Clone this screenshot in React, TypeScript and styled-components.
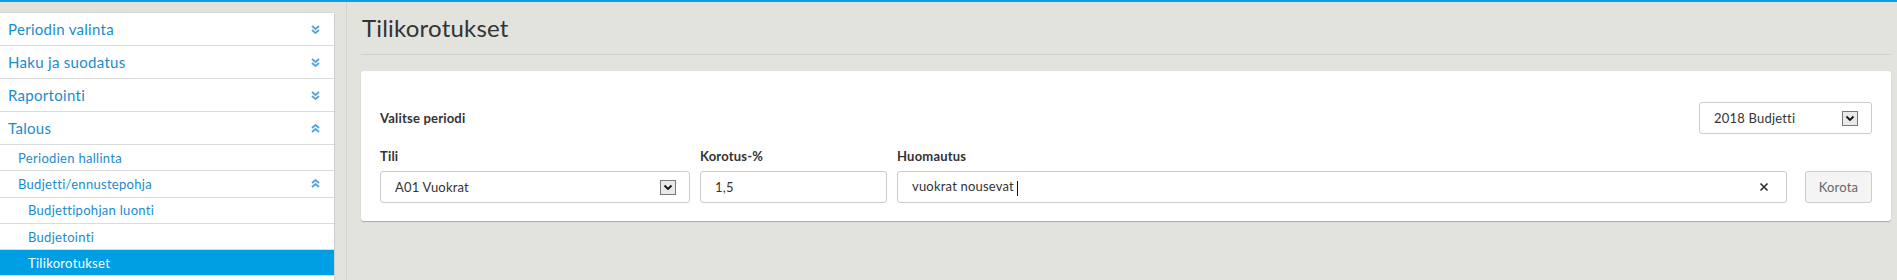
import React from "react";
import styled, { createGlobalStyle } from "styled-components";

const Global = createGlobalStyle`
  html, body { margin: 0; padding: 0; }
  body {
    background: #e3e3de;
    font-family: "Lato", "Open Sans", sans-serif;
    overflow: hidden;
  }
  * { box-sizing: border-box; }
`;

const Page = styled.div`
  border-top: 2px solid #0a9fe2;
  display: flex;
  align-items: stretch;
  min-height: 280px;
`;

const Sidebar = styled.nav`
  width: 335px;
  margin-top: 10px;
  background: #fff;
  border-top: 1px solid #d6d6d2;
  border-right: 1px solid #cfcfcb;
  border-top-right-radius: 3px;
  flex-shrink: 0;
  display: flex;
  flex-direction: column;
`;

const NavRow = styled.div<{ $level: number; $active?: boolean }>`
  display: flex;
  align-items: center;
  justify-content: space-between;
  flex-shrink: 0;
  height: ${(p) => (p.$level === 0 ? 33 : 26.3)}px;
  padding-left: ${(p) => 8 + p.$level * 10}px;
  padding-right: 14px;
  border-bottom: 1px solid #dcdcdc;
  font-size: ${(p) => (p.$level === 0 ? 15 : 13)}px;
  letter-spacing: 0.3px;
  color: ${(p) => (p.$active ? "#fff" : "#1a8bcd")};
  background: ${(p) => (p.$active ? "#009fe3" : "#fff")};
`;

const Gutter = styled.div`
  width: 12px;
  flex-shrink: 0;
  border-right: 1px solid #d3d3ce;
`;

const Main = styled.main`
  flex: 1;
  padding: 0 6px 0 14px;
  display: flex;
  flex-direction: column;
`;

const Title = styled.h1`
  margin: 0;
  padding: 11px 0 0 1px;
  height: 53px;
  font-size: 24px;
  font-weight: 400;
  color: #333;
  border-bottom: 1px solid #d2d2cd;
  letter-spacing: 0.2px;
`;

const Card = styled.section`
  margin-top: 16px;
  background: #fff;
  border-radius: 3px;
  box-shadow: 0 1px 1px rgba(0, 0, 0, 0.25);
  padding: 13px 19px 18px 19px;
  display: flex;
  flex-direction: column;
`;

const PeriodRow = styled.div`
  display: flex;
  align-items: center;
  justify-content: space-between;
  height: 32px;
  margin-top: 18px;
`;

const Label = styled.label`
  font-size: 13px;
  font-weight: 700;
  color: #333;
  display: block;
  letter-spacing: 0.2px;
`;

const FormRow = styled.div`
  display: flex;
  align-items: flex-end;
  margin-top: 14px;
  gap: 10px;
`;

const Field = styled.div<{ $w?: number; $grow?: boolean }>`
  display: flex;
  flex-direction: column;
  gap: 7px;
  width: ${(p) => (p.$w ? `${p.$w}px` : "auto")};
  flex: ${(p) => (p.$grow ? 1 : "none")};
`;

const Box = styled.div<{ $w?: number }>`
  height: 32px;
  width: ${(p) => (p.$w ? `${p.$w}px` : "100%")};
  border: 1px solid #ccc;
  border-radius: 3px;
  background: #fff;
  display: flex;
  align-items: center;
  justify-content: space-between;
  padding: 0 13px 0 14px;
  font-size: 13px;
  letter-spacing: 0.2px;
  color: #333;
`;

const DropBtn = styled.span`
  width: 16px;
  height: 15px;
  border: 1px solid #7a7a7a;
  background: #e9e9e9;
  display: inline-flex;
  align-items: center;
  justify-content: center;
`;

const Caret = styled.span`
  display: inline-block;
  width: 1px;
  height: 15px;
  background: #111;
  margin-left: 3px;
  vertical-align: middle;
`;

const ClearBtn = styled.span`
  display: inline-flex;
  margin-right: 4px;
`;

const Button = styled.button`
  height: 32px;
  width: 67px;
  margin-left: 8px;
  border: 1px solid #ccc;
  border-radius: 3px;
  background: #f4f4f4;
  color: #666;
  font-family: inherit;
  font-size: 13px;
  letter-spacing: 0.2px;
`;

const Chevrons = ({ up }: { up?: boolean }) => (
  <svg width="9" height="9" viewBox="0 0 9 9" style={{ transform: up ? "rotate(180deg)" : undefined }}>
    <path d="M1 1 L4.5 4 L8 1" fill="none" stroke="#4ea3dd" strokeWidth="1.8" />
    <path d="M1 5 L4.5 8 L8 5" fill="none" stroke="#4ea3dd" strokeWidth="1.8" />
  </svg>
);

const Down = () => (
  <svg width="10" height="7" viewBox="0 0 10 7">
    <path d="M1.5 1.5 L5 5 L8.5 1.5" fill="none" stroke="#111" strokeWidth="1.8" />
  </svg>
);

const XIcon = () => (
  <svg width="10" height="10" viewBox="0 0 10 10">
    <path d="M1.5 1.5 L8.5 8.5 M8.5 1.5 L1.5 8.5" stroke="#333" strokeWidth="1.7" />
  </svg>
);

const nav: { t: string; l: number; c?: "up" | "down"; a?: boolean }[] = [
  { t: "Periodin valinta", l: 0, c: "down" },
  { t: "Haku ja suodatus", l: 0, c: "down" },
  { t: "Raportointi", l: 0, c: "down" },
  { t: "Talous", l: 0, c: "up" },
  { t: "Periodien hallinta", l: 1 },
  { t: "Budjetti/ennustepohja", l: 1, c: "up" },
  { t: "Budjettipohjan luonti", l: 2 },
  { t: "Budjetointi", l: 2 },
  { t: "Tilikorotukset", l: 2, a: true },
];

export default function App() {
  return (
    <>
      <Global />
      <Page>
        <Sidebar>
          {nav.map((n) => (
            <NavRow key={n.t} $level={n.l} $active={n.a}>
              <span>{n.t}</span>
              {n.c && <Chevrons up={n.c === "up"} />}
            </NavRow>
          ))}
        </Sidebar>
        <Gutter />
        <Main>
          <Title>Tilikorotukset</Title>
          <Card>
            <PeriodRow>
              <Label>Valitse periodi</Label>
              <Box $w={173}>
                <span>2018 Budjetti</span>
                <DropBtn><Down /></DropBtn>
              </Box>
            </PeriodRow>
            <FormRow>
              <Field $w={310}>
                <Label>Tili</Label>
                <Box>
                  <span>A01 Vuokrat</span>
                  <DropBtn><Down /></DropBtn>
                </Box>
              </Field>
              <Field $w={187}>
                <Label>Korotus-%</Label>
                <Box><span>1,5</span></Box>
              </Field>
              <Field $grow>
                <Label>Huomautus</Label>
                <Box>
                  <span>vuokrat nousevat<Caret /></span>
                  <ClearBtn><XIcon /></ClearBtn>
                </Box>
              </Field>
              <Button>Korota</Button>
            </FormRow>
          </Card>
        </Main>
      </Page>
    </>
  );
}
